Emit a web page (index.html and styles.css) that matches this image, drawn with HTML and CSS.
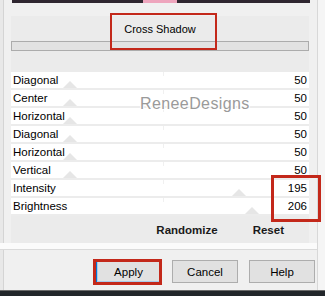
FILE: index.html
```html
<!DOCTYPE html>
<html>
<head>
<meta charset="utf-8">
<link rel="stylesheet" href="styles.css">
</head>
<body>
<div class="win">
  <div class="topbar"><span class="pink"></span></div>
  <div class="group">
    <div class="panel">
      <div class="title">Cross Shadow</div>
      <div class="bar"></div>
      <div class="rows">
        <div class="row"><span class="thumb" style="left:71px"></span><span class="tick"></span><span class="lbl">Diagonal</span><span class="val">50</span></div>
        <div class="row"><span class="thumb" style="left:71px"></span><span class="tick"></span><span class="lbl">Center</span><span class="val">50</span></div>
        <div class="row"><span class="thumb" style="left:71px"></span><span class="tick"></span><span class="lbl">Horizontal</span><span class="val">50</span></div>
        <div class="row"><span class="thumb" style="left:71px"></span><span class="tick"></span><span class="lbl">Diagonal</span><span class="val">50</span></div>
        <div class="row"><span class="thumb" style="left:71px"></span><span class="tick"></span><span class="lbl">Horizontal</span><span class="val">50</span></div>
        <div class="row"><span class="thumb" style="left:71px"></span><span class="tick"></span><span class="lbl">Vertical</span><span class="val">50</span></div>
        <div class="row"><span class="thumb" style="left:240px"></span><span class="tick"></span><span class="lbl">Intensity</span><span class="val">195</span></div>
        <div class="row"><span class="thumb" style="left:253px"></span><span class="tick"></span><span class="lbl">Brightness</span><span class="val">206</span></div>
      </div>
      <div class="actions"><span class="randomize">Randomize</span><span class="reset">Reset</span></div>
    </div>
  </div>
  <div class="buttons">
    <div class="btn btn-default">Apply</div>
    <div class="btn">Cancel</div>
    <div class="btn">Help</div>
  </div>
  <div class="bottombar"></div>

  <div class="watermark">ReneeDesigns</div>
  <div class="mark mark-title"></div>
  <div class="mark mark-values"></div>
  <div class="mark mark-apply"></div>
</div>
</body>
</html>
```
FILE: styles.css
```css
* { box-sizing: border-box; }
html, body { margin: 0; padding: 0; }
body {
  width: 325px;
  height: 296px;
  overflow: hidden;
  background: #f0f0f0;
  font-family: "Liberation Sans", Arial, sans-serif;
  font-size: 11px;
  color: #000;
}
.win {
  position: relative;
  width: 325px;
  height: 296px;
  display: flex;
  flex-direction: column;
  background: linear-gradient(to right, #e8e8e8 0, #e8e8e8 3px, #d4d4d4 3px, #d4d4d4 4px, #f0f0f0 4px, #f0f0f0 317px, #d8d8d8 317px, #d8d8d8 318px, #f5f5f5 318px);
}
.topbar {
  height: 3px;
  margin: 0 15px 0 12px;
  background: #2f2630;
  display: flex;
}
.topbar .pink {
  margin-left: 131px;
  width: 34px;
  background: #eea5bd;
}
.group {
  height: 247px;
  padding: 13px 8px 6px 11px;
  border-bottom: 1px solid #dadada;
  margin-right: 8px;
  background: linear-gradient(to bottom, transparent 0, transparent 240px, #fbfbfb 240px);
}
.panel {
  height: 227px;
  width: 298px;
  background: #ebebeb;
  display: flex;
  flex-direction: column;
}
.title {
  height: 25px;
  display: flex;
  align-items: center;
  justify-content: center;
  padding-top: 1px;
  font-size: 11px;
}
.bar {
  height: 10px;
  border: 1px solid #acacac;
  background: #e2e2e2;
  margin-bottom: 21px;
}
.rows {
  display: flex;
  flex-direction: column;
}
.row {
  position: relative;
  height: 18px;
  background: #ffffff;
  border-bottom: 2px solid #ececec;
  display: flex;
  align-items: center;
  justify-content: space-between;
  padding: 0 2px 0 2px;
  font-size: 11.5px;
}
.lbl, .val { position: relative; z-index: 1; }
.thumb {
  position: absolute;
  bottom: 0;
  margin-left: -19px;
  width: 0;
  height: 0;
  border-left: 7px solid transparent;
  border-right: 7px solid transparent;
  border-bottom: 7px solid #e6e6e6;
}
.tick {
  position: absolute;
  top: 0;
  left: 152px;
  width: 1px;
  height: 4px;
  background: #f0f0f0;
}
.actions {
  flex: 1;
  display: flex;
  align-items: center;
  justify-content: flex-end;
  font-weight: bold;
  font-size: 11.5px;
  color: #1a1a1a;
}
.randomize { margin-right: 35px; }
.reset { margin-right: 25px; }
.buttons {
  display: flex;
  gap: 11px;
  padding-left: 96px;
  margin-top: 10px;
  height: 23px;
}
.btn {
  width: 66px;
  height: 23px;
  border: 1px solid #adadad;
  background: #e1e1e1;
  display: flex;
  align-items: center;
  justify-content: center;
  font-size: 11.5px;
}
.btn-default {
  width: 65px;
  border: 1px solid #0078d7;
  box-shadow: inset 0 0 0 1px #a9cbea;
}
.bottombar {
  margin-top: auto;
  height: 6px;
  background: #22262a;
  border-top: 1px solid #6a6a6a;
}
.watermark {
  position: absolute;
  left: 140px;
  top: 95px;
  font-size: 16px;
  letter-spacing: 0.4px;
  color: #9a9a9a;
  text-shadow: 1px 1px 0 #fff, -1px -1px 0 #fff, 1px -1px 0 #fff, -1px 1px 0 #fff;
  z-index: 3;
}
.mark {
  position: absolute;
  border: 2px solid #c3281a;
  z-index: 4;
}
.mark-title { left: 110px; top: 13px; width: 107px; height: 37px; }
.mark-values { left: 271px; top: 175px; width: 50px; height: 47px; border-width: 3px; }
.mark-apply { left: 93px; top: 259px; width: 69px; height: 26px; border-width: 3px; }
```
